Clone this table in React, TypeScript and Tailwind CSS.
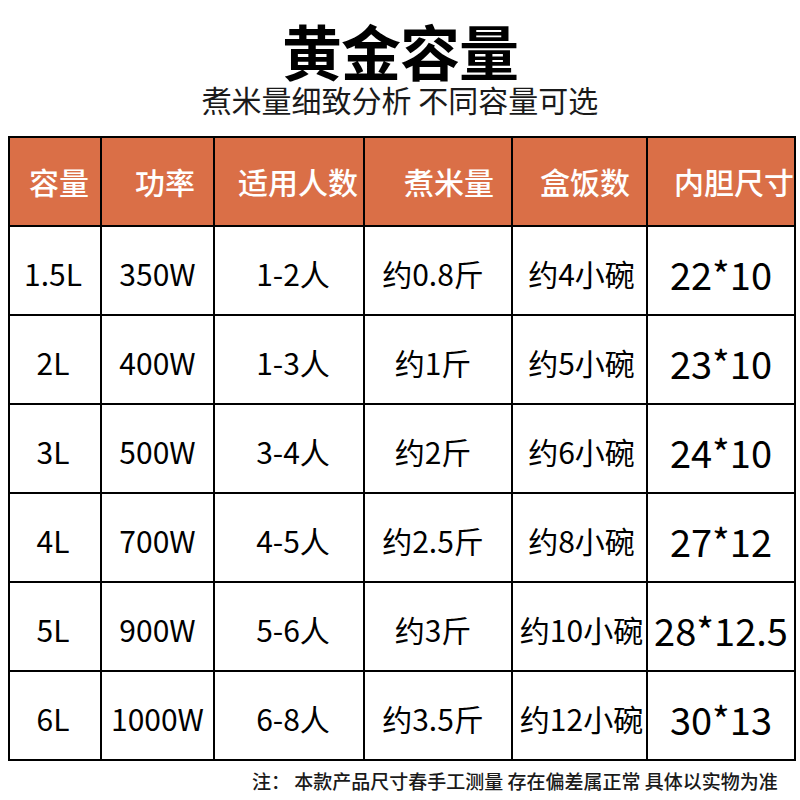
const font = { fontFamily: '"Noto Sans CJK SC", "Noto Sans", sans-serif' };

const headers = [
  { label: "容量", pad: "pl-[19px]" },
  { label: "功率", pad: "pl-[33px]" },
  { label: "适用人数", pad: "pl-[23px]" },
  { label: "煮米量", pad: "pl-[39px]" },
  { label: "盒饭数", pad: "pl-[27px]" },
  { label: "内胆尺寸", pad: "pl-[26px]" },
];

const rows = [
  ["1.5L", "350W", "1-2人", "约0.8斤", "约4小碗", "22*10"],
  ["2L", "400W", "1-3人", "约1斤", "约5小碗", "23*10"],
  ["3L", "500W", "3-4人", "约2斤", "约6小碗", "24*10"],
  ["4L", "700W", "4-5人", "约2.5斤", "约8小碗", "27*12"],
  ["5L", "900W", "5-6人", "约3斤", "约10小碗", "28*12.5"],
  ["6L", "1000W", "6-8人", "约3.5斤", "约12小碗", "30*13"],
];

const widths = ["w-[92px]", "w-[113px]", "w-[150px]", "w-[148px]", "w-[135px]", "w-[144px]"];
const bodyPad = ["pr-[4px]", "", "pl-[8px]", "pr-[10px]", "pl-[4px]", ""];

export default function App() {
  return (
    <div className="w-[800px] h-[800px] bg-white text-black overflow-hidden" style={font}>
      <div className="flex flex-col items-center pt-[20px]">
        <h1 className="text-[60px] leading-[60px] font-bold tracking-[-1px]">黄金容量</h1>
        <p className="text-[30px] leading-[34px] text-[#1a1a1a] mt-[2px]">煮米量细致分析 不同容量可选</p>
      </div>

      <table className="ml-[8px] mt-[20px] border-collapse border-2 border-black table-fixed">
        <thead>
          <tr className="h-[89px] bg-[#da6f47]">
            {headers.map((h, i) => (
              <th
                key={i}
                className={`${widths[i]} ${h.pad} border-2 border-black text-left text-white font-medium text-[30px] whitespace-nowrap overflow-hidden`}
              >
                {h.label}
              </th>
            ))}
          </tr>
        </thead>
        <tbody>
          {rows.map((r, ri) => (
            <tr key={ri} className="h-[89px]">
              {r.map((c, ci) => (
                <td
                  key={ci}
                  className={`${bodyPad[ci]} border-2 border-black text-center whitespace-nowrap pt-[6px] ${
                    ci === 5 ? "text-[38px]" : "text-[30px]"
                  }`}
                >
                  {c}
                </td>
              ))}
            </tr>
          ))}
        </tbody>
      </table>

      <p className="text-[19px] font-medium text-[#1a1a1a] mt-[6px] pl-[252px] whitespace-nowrap">
        注： 本款产品尺寸春手工测量 存在偏差属正常 具体以实物为准
      </p>
    </div>
  );
}
